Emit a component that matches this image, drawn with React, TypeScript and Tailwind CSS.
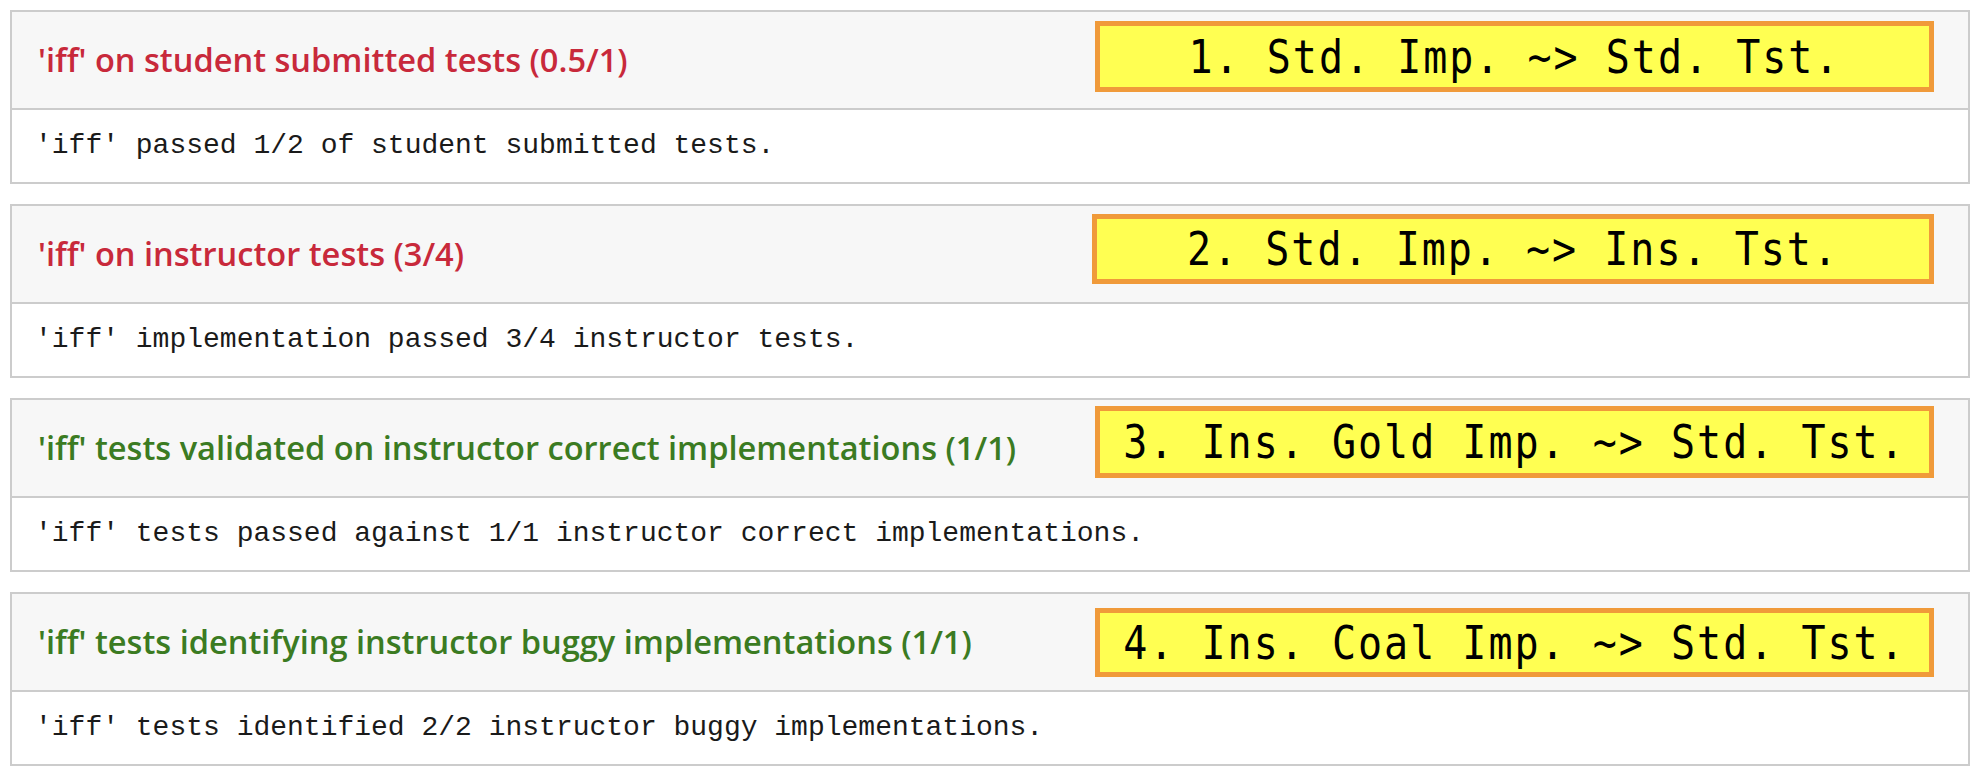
import React from "react";

type Card = {
  title: string;
  color: "red" | "green";
  body: string;
  tag: string;
  box: { left: number; top: number; width: number; height: number };
};

const cards: Card[] = [
  {
    title: "'iff' on student submitted tests (0.5/1)",
    color: "red",
    body: "'iff' passed 1/2 of student submitted tests.",
    tag: "1. Std. Imp. ~> Std. Tst.",
    box: { left: 1083, top: 9, width: 839, height: 71 },
  },
  {
    title: "'iff' on instructor tests (3/4)",
    color: "red",
    body: "'iff' implementation passed 3/4 instructor tests.",
    tag: "2. Std. Imp. ~> Ins. Tst.",
    box: { left: 1080, top: 8, width: 842, height: 70 },
  },
  {
    title: "'iff' tests validated on instructor correct implementations (1/1)",
    color: "green",
    body: "'iff' tests passed against 1/1 instructor correct implementations.",
    tag: "3. Ins. Gold Imp. ~> Std. Tst.",
    box: { left: 1083, top: 6, width: 839, height: 72 },
  },
  {
    title: "'iff' tests identifying instructor buggy implementations (1/1)",
    color: "green",
    body: "'iff' tests identified 2/2 instructor buggy implementations.",
    tag: "4. Ins. Coal Imp. ~> Std. Tst.",
    box: { left: 1083, top: 14, width: 839, height: 69 },
  },
];

export default function App() {
  return (
    <div className="bg-white w-[1982px] h-[778px] pt-[10px] px-[10px] flex flex-col gap-[20px]">
      {cards.map((c, i) => (
        <div key={i} className="relative border-2 border-[#cccccc] w-[1960px]">
          <div className="h-[98px] bg-[#f7f7f7] border-b-2 border-[#cccccc] px-[26px] flex items-center">
            <span
              className={
                "text-[32.6px] font-semibold " +
                (c.color === "red" ? "text-[#c8293b]" : "text-[#3b7b22]")
              }
              style={{ fontFamily: '"Open Sans", "Noto Sans", sans-serif' }}
            >
              {c.title}
            </span>
          </div>
          <div className="h-[72px] bg-white px-[23px] flex items-center">
            <span
              className="text-[28px] text-[#1a1a1a]"
              style={{ fontFamily: '"Liberation Mono", "Courier New", monospace' }}
            >
              {c.body}
            </span>
          </div>
          <div
            className="absolute bg-[#ffff52] border-[5px] border-[#f09a3a] flex items-center justify-center overflow-hidden"
            style={{ left: c.box.left, top: c.box.top, width: c.box.width, height: c.box.height }}
          >
            <span
              className="text-[40px] tracking-[2px] text-black scale-y-[1.15] leading-none whitespace-pre"
              style={{ fontFamily: '"DejaVu Sans Mono", monospace' }}
            >
              {c.tag}
            </span>
          </div>
        </div>
      ))}
    </div>
  );
}
